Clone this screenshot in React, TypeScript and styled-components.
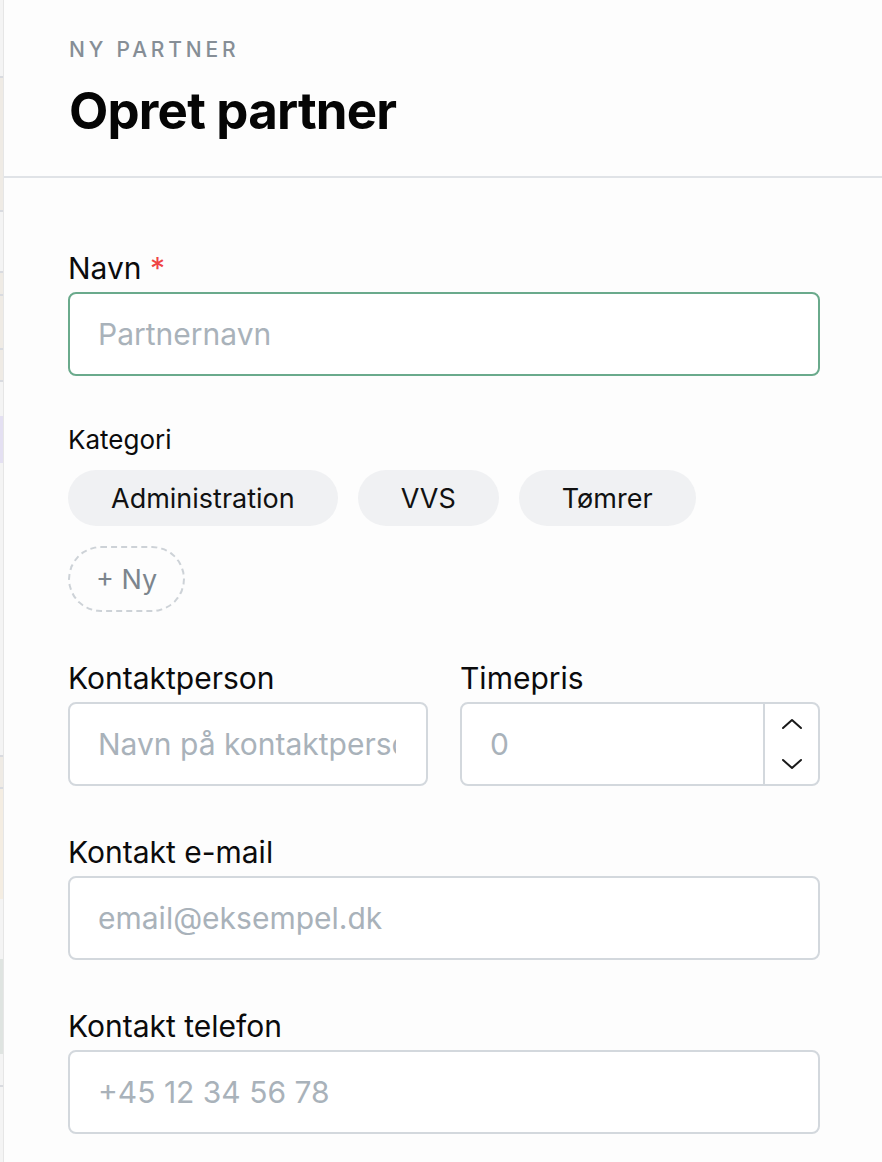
import * as React from 'react'
import styled, { createGlobalStyle } from 'styled-components'

const GlobalStyle = createGlobalStyle`
    html, body {
        margin: 0;
        padding: 0;
        background: #fdfdfd;
    }
    body {
        font-family: Inter, "Noto Sans", "Liberation Sans", sans-serif;
        color: #0b0b0c;
    }
`

// slivers of the page that lies behind the drawer
const backdrop: { h: number; bg: string }[] = [
    { h: 76, bg: '#f4f4f4' },
    { h: 2, bg: '#d9dbe0' },
    { h: 132, bg: '#efebe5' },
    { h: 2, bg: '#d9dbe0' },
    { h: 59, bg: '#f4f4f4' },
    { h: 2, bg: '#d9dbe0' },
    { h: 21, bg: '#efebe5' },
    { h: 2, bg: '#d9dbe0' },
    { h: 52, bg: '#efebe5' },
    { h: 2, bg: '#d9dbe0' },
    { h: 30, bg: '#efebe5' },
    { h: 2, bg: '#d9dbe0' },
    { h: 34, bg: '#f4f4f4' },
    { h: 47, bg: '#e4e0f2' },
    { h: 292, bg: '#f4f4f4' },
    { h: 2, bg: '#d9dbe0' },
    { h: 30, bg: '#efebe5' },
    { h: 2, bg: '#d9dbe0' },
    { h: 110, bg: '#f4ede2' },
    { h: 60, bg: '#f4f4f4' },
    { h: 95, bg: '#dfe4e1' },
    { h: 31, bg: '#f4f4f4' },
    { h: 2, bg: '#d9dbe0' },
    { h: 80, bg: '#f4f4f4' },
]

const categories = ['Administration', 'VVS', 'Tømrer']

const App = () => {
    return (
        <Page>
            <GlobalStyle />
            <Backdrop>
                {backdrop.map((b, i) => (
                    <BackdropSlice key={i} $h={b.h} $bg={b.bg} />
                ))}
            </Backdrop>
            <Drawer>
                <Header>
                    <Eyebrow>Ny partner</Eyebrow>
                    <Title>Opret partner</Title>
                </Header>
                <Form>
                    <Field>
                        <Label>
                            Navn <Required>*</Required>
                        </Label>
                        <Input $focused placeholder="Partnernavn" />
                    </Field>

                    <Field $gap={14}>
                        <SmallLabel>Kategori</SmallLabel>
                        <Chips>
                            {categories.map((c) => (
                                <Chip key={c}>{c}</Chip>
                            ))}
                            <NewChip>+ Ny</NewChip>
                        </Chips>
                    </Field>

                    <Row>
                        <Field>
                            <Label>Kontaktperson</Label>
                            <Input placeholder="Navn på kontaktperson" />
                        </Field>
                        <Field>
                            <Label>Timepris</Label>
                            <NumberBox>
                                <NumberInput placeholder="0" />
                                <Stepper>
                                    <StepBtn>
                                        <svg width="22" height="12" viewBox="0 0 22 12" fill="none">
                                            <path d="M2 10 L11 2 L20 10" stroke="#1a1a1a" strokeWidth="2" strokeLinecap="round" strokeLinejoin="round" />
                                        </svg>
                                    </StepBtn>
                                    <StepBtn>
                                        <svg width="22" height="12" viewBox="0 0 22 12" fill="none">
                                            <path d="M2 2 L11 10 L20 2" stroke="#1a1a1a" strokeWidth="2" strokeLinecap="round" strokeLinejoin="round" />
                                        </svg>
                                    </StepBtn>
                                </Stepper>
                            </NumberBox>
                        </Field>
                    </Row>

                    <Field>
                        <Label>Kontakt e-mail</Label>
                        <Input placeholder="email@eksempel.dk" />
                    </Field>

                    <Field>
                        <Label>Kontakt telefon</Label>
                        <Input placeholder="+45 12 34 56 78" />
                    </Field>
                </Form>
            </Drawer>
        </Page>
    )
}

export default App

const Page = styled.div`
    display: flex;
    width: 882px;
    height: 1162px;
    overflow: hidden;
`

const Backdrop = styled.div`
    width: 4px;
    flex-shrink: 0;
    display: flex;
    flex-direction: column;
`

const BackdropSlice = styled.div<{ $h: number; $bg: string }>`
    height: ${(p) => p.$h}px;
    flex-shrink: 0;
    background: ${(p) => p.$bg};
`

const Drawer = styled.div`
    flex: 1;
    background: #fdfdfd;
    box-shadow: -1px 0 0 #e6e6e6;
`

const Header = styled.div`
    padding: 38px 40px 35px 65px;
    border-bottom: 2px solid #e0e3e7;
`

const Eyebrow = styled.div`
    font-size: 21px;
    font-weight: 500;
    letter-spacing: 3.8px;
    text-transform: uppercase;
    color: #868e96;
    line-height: 24px;
`

const Title = styled.h1`
    margin: 19px 0 0;
    font-size: 51px;
    font-weight: 700;
    letter-spacing: -0.8px;
    line-height: 60px;
    color: #050505;
`

const Form = styled.div`
    padding: 72px 62px 0 64px;
    display: flex;
    flex-direction: column;
    gap: 48px;
`

const Field = styled.div<{ $gap?: number }>`
    display: flex;
    flex-direction: column;
    gap: ${(p) => p.$gap ?? 6}px;
    min-width: 0;
`

const Label = styled.label`
    font-size: 30px;
    font-weight: 400;
    line-height: 36px;
    color: #0b0b0c;
`

const SmallLabel = styled(Label)`
    font-size: 26px;
    line-height: 32px;
`

const Required = styled.span`
    color: #ef4444;
`

const Input = styled.input<{ $focused?: boolean }>`
    box-sizing: border-box;
    width: 100%;
    height: 84px;
    padding: 0 30px 0 28px;
    border: 2px solid ${(p) => (p.$focused ? '#6aaa8c' : '#d3d8dd')};
    border-radius: 8px;
    background: #fff;
    font-family: inherit;
    font-size: 30px;
    color: #111;
    outline: none;
    &::placeholder {
        color: #a9b2ba;
    }
`

const Chips = styled.div`
    display: flex;
    flex-wrap: wrap;
    gap: 20px;
`

const Chip = styled.div`
    height: 56px;
    padding: 0 43px;
    display: flex;
    align-items: center;
    border-radius: 28px;
    background: #f0f1f3;
    font-size: 27px;
    color: #111;
`

const NewChip = styled(Chip)`
    box-sizing: border-box;
    height: 66px;
    padding: 0 26px;
    border-radius: 33px;
    background: transparent;
    border: 2px dashed #cdd2d7;
    color: #7c858d;
`

const Row = styled.div`
    display: grid;
    grid-template-columns: 1fr 1fr;
    gap: 32px;
`

const NumberBox = styled.div`
    box-sizing: border-box;
    height: 84px;
    display: flex;
    border: 2px solid #d3d8dd;
    border-radius: 8px;
    background: #fff;
    overflow: hidden;
`

const NumberInput = styled.input`
    flex: 1;
    min-width: 0;
    border: none;
    padding: 0 28px;
    background: transparent;
    font-family: inherit;
    font-size: 30px;
    outline: none;
    &::placeholder {
        color: #a9b2ba;
    }
`

const Stepper = styled.div`
    width: 53px;
    border-left: 2px solid #d3d8dd;
    display: flex;
    flex-direction: column;
`

const StepBtn = styled.div`
    flex: 1;
    display: flex;
    align-items: center;
    justify-content: center;
`
